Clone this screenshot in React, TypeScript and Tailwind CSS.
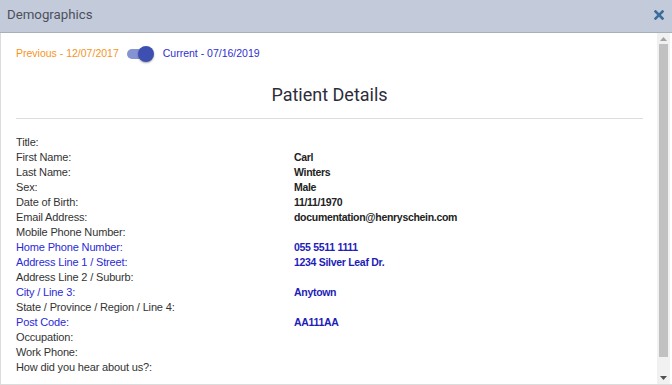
import React from 'react';

type Row = { label: string; value?: string; highlight?: boolean };

const rows: Row[] = [
  { label: 'Title:' },
  { label: 'First Name:', value: 'Carl' },
  { label: 'Last Name:', value: 'Winters' },
  { label: 'Sex:', value: 'Male' },
  { label: 'Date of Birth:', value: '11/11/1970' },
  { label: 'Email Address:', value: 'documentation@henryschein.com' },
  { label: 'Mobile Phone Number:' },
  { label: 'Home Phone Number:', value: '055 5511 1111', highlight: true },
  { label: 'Address Line 1 / Street:', value: '1234 Silver Leaf Dr.', highlight: true },
  { label: 'Address Line 2 / Suburb:' },
  { label: 'City / Line 3:', value: 'Anytown', highlight: true },
  { label: 'State / Province / Region / Line 4:' },
  { label: 'Post Code:', value: 'AA111AA', highlight: true },
  { label: 'Occupation:' },
  { label: 'Work Phone:' },
  { label: 'How did you hear about us?:' },
];

export default function App() {
  return (
    <div className="w-[672px] h-[385px] flex flex-col bg-white overflow-hidden">
      {/* Dialog header */}
      <div className="h-[33px] flex-shrink-0 flex items-center justify-between pl-[7px] pr-[8px] pb-[3px] bg-[#c3cbdb] border-b border-[#a9afb9]">
        <span className="text-[13.25px] text-[#4b505b] font-['Roboto',sans-serif]">Demographics</span>
        <svg width="10" height="10" viewBox="0 0 10 10" className="mt-[1px]">
          <path d="M1.5 1.5 L8.5 8.5 M8.5 1.5 L1.5 8.5" stroke="#3c6e9c" strokeWidth="2.6" strokeLinecap="square" />
        </svg>
      </div>

      {/* Body */}
      <div className="flex-1 flex border-l border-b border-[#dcdcdc] min-h-0">
        <div className="flex-1 flex flex-col pl-[15px] pr-[14px] font-['Liberation_Sans',Arial,sans-serif]">
          <div className="h-[38px] pt-[4px] flex-shrink-0 flex items-center text-[10.5px]">
            <span className="text-[#f7941d]">Previous - 12/07/2017</span>
            <div className="relative ml-[8px] mr-[9px] w-[27px] h-[16px] flex items-center">
              <div className="w-[24px] h-[10px] rounded-full bg-[#8593d3]" />
              <div className="absolute right-[0px] top-[0px] w-[16px] h-[16px] rounded-full bg-[#3e4fb2] shadow-[0_1px_2px_rgba(0,0,0,0.35)]" />
            </div>
            <span className="text-[#2f2fd1]">Current - 07/16/2019</span>
          </div>

          <div className="h-[48px] flex-shrink-0 flex items-center justify-center border-b border-[#dddddd]">
            <span className="text-[18px] text-[#2d2d3a] font-['Roboto',sans-serif]">Patient Details</span>
          </div>

          <div className="flex flex-col pt-[16px] text-[11px] leading-[15px]">
            {rows.map((r) => (
              <div key={r.label} className="flex h-[15px]">
                <span className={`w-[278px] tracking-[-0.15px] ${r.highlight ? 'text-[#2a2ad6]' : 'text-[#333333]'}`}>{r.label}</span>
                <span className={`font-bold text-[10.5px] tracking-[-0.3px] ${r.highlight ? 'text-[#1d1db8]' : 'text-[#222222]'}`}>{r.value ?? ''}</span>
              </div>
            ))}
          </div>
        </div>

        {/* Scrollbar */}
        <div className="w-[13px] mr-[2px] flex flex-col bg-[#f1f1f1]">
          <div className="h-[11px] flex items-center justify-center">
            <svg width="7" height="4" viewBox="0 0 7 4">
              <path d="M0 4 L3.5 0 L7 4 Z" fill="#a3a3a3" />
            </svg>
          </div>
          <div className="mx-[2px] h-[313px] bg-[#c1c1c1]" />
          <div className="flex-1 flex items-end justify-center pb-[4px]">
            <svg width="7" height="4" viewBox="0 0 7 4">
              <path d="M0 0 L7 0 L3.5 4 Z" fill="#505050" />
            </svg>
          </div>
        </div>
      </div>
    </div>
  );
}
